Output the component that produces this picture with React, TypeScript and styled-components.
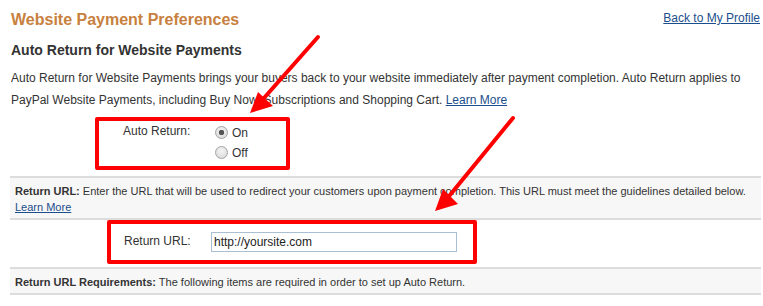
import styled, { createGlobalStyle } from "styled-components";

const GlobalStyle = createGlobalStyle`
  body {
    margin: 0;
    background: #fff;
    font-family: Arial, "Liberation Sans", sans-serif;
    color: #333;
  }
`;

const Page = styled.div`
  position: relative;
  width: 763px;
  height: 306px;
  overflow: hidden;
  padding: 0 2px 0 10px;
  box-sizing: border-box;
`;

const Header = styled.div`
  display: flex;
  justify-content: space-between;
  align-items: flex-start;
  padding-top: 9px;
`;

const Title = styled.h1`
  margin: 0 0 0 1px;
  font-size: 16px;
  line-height: 22px;
  font-weight: bold;
  color: #c8803e;
`;

const Link = styled.a`
  color: #1b4e8c;
  text-decoration: underline;
  font-size: 12px;
  cursor: pointer;
`;

const TopLink = styled(Link)`
  margin-top: 2px;
  margin-right: 1px;
`;

const Subtitle = styled.h2`
  margin: 10px 0 0 1px;
  font-size: 14px;
  line-height: 18px;
  font-weight: bold;
`;

const Intro = styled.p`
  margin: 8px 0 0 1px;
  font-size: 12px;
  line-height: 22px;
`;

const Highlight = styled.div<{ $left: number; $width: number; $height: number }>`
  margin-left: ${(p) => p.$left}px;
  width: ${(p) => p.$width}px;
  height: ${(p) => p.$height}px;
  border: 4px solid #ff0000;
  border-radius: 2px;
  box-sizing: border-box;
  display: flex;
  align-items: flex-start;
`;

const FieldLabel = styled.span<{ $indent: number; $width: number; $top: number }>`
  box-sizing: border-box;
  padding-left: ${(p) => p.$indent}px;
  margin-top: ${(p) => p.$top}px;
  width: ${(p) => p.$width}px;
  flex-shrink: 0;
  font-size: 12px;
  line-height: 16px;
`;

const RadioGroup = styled.div`
  display: flex;
  flex-direction: column;
  gap: 4px;
  margin-top: 4px;
`;

const RadioOption = styled.label`
  display: flex;
  align-items: center;
  gap: 4px;
  font-size: 12px;
  line-height: 16px;
`;

const Radio = styled.input.attrs({ type: "radio" })`
  appearance: none;
  margin: 0;
  width: 13px;
  height: 13px;
  border-radius: 50%;
  border: 1px solid #a3a3a3;
  background: radial-gradient(circle at 50% 35%, #f4f4f4, #d6d6d6);
  box-sizing: border-box;
  position: relative;
  top: -1px;
  &:checked {
    background: radial-gradient(circle, #555 0 2.5px, transparent 3px),
      radial-gradient(circle at 50% 35%, #f4f4f4, #d6d6d6);
  }
`;

const Divider = styled.div<{ $gap?: number }>`
  border-top: 2px solid #dcdcdc;
  margin-top: ${(p) => p.$gap ?? 0}px;
`;

const Band = styled.div`
  border-bottom: 2px solid #dcdcdc;
  background: #f7f7f7;
  padding: 5px 5px 3px 5px;
  font-size: 11px;
  line-height: 16px;
`;

const SmallLink = styled(Link)`
  font-size: 11px;
`;

const UrlRow = styled.div`
  padding: 0 0 3px;
`;

const UrlInput = styled.input`
  width: 246px;
  height: 20px;
  margin-top: 8px;
  border: 1px solid #a9bfd6;
  box-sizing: border-box;
  padding: 0 2px;
  font-family: Arial, "Liberation Sans", sans-serif;
  font-size: 12px;
  color: #222;
  outline: none;
`;

const Overlay = styled.svg`
  position: absolute;
  left: 0;
  top: 0;
  pointer-events: none;
`;

export default function App() {
  return (
    <Page>
      <GlobalStyle />
      <Header>
        <Title>Website Payment Preferences</Title>
        <TopLink>Back to My Profile</TopLink>
      </Header>
      <Subtitle>Auto Return for Website Payments</Subtitle>
      <Intro>
        Auto Return for Website Payments brings your buyers back to your website immediately after
        payment completion. Auto Return applies to PayPal Website Payments, including Buy Now,
        Subscriptions and Shopping Cart. <Link>Learn More</Link>
      </Intro>

      <Highlight $left={85} $width={195} $height={53} style={{ marginTop: 6 }}>
        <FieldLabel $indent={24} $width={116} $top={2}>
          Auto Return:
        </FieldLabel>
        <RadioGroup>
          <RadioOption>
            <Radio name="autoReturn" defaultChecked />
            On
          </RadioOption>
          <RadioOption>
            <Radio name="autoReturn" />
            Off
          </RadioOption>
        </RadioGroup>
      </Highlight>

      <Divider $gap={6} />
      <Band>
        <b>Return URL:</b> Enter the URL that will be used to redirect your customers upon payment
        completion. This URL must meet the guidelines detailed below.
        <br />
        <SmallLink>Learn More</SmallLink>
      </Band>
      <UrlRow>
        <Highlight $left={97} $width={370} $height={44}>
          <FieldLabel $indent={13} $width={100} $top={9}>
            Return URL:
          </FieldLabel>
          <UrlInput defaultValue="http://yoursite.com" />
        </Highlight>
      </UrlRow>
      <Divider />
      <Band>
        <b>Return URL Requirements:</b> The following items are required in order to set up Auto
        Return.
      </Band>

      <Overlay width="763" height="306" viewBox="0 0 763 306">
        <g stroke="#ff0000" strokeWidth="4" strokeLinecap="round">
          <line x1="318" y1="37" x2="264" y2="98" />
          <line x1="513" y1="118" x2="450" y2="195" />
        </g>
        <polygon points="250,113 273,106 258,92" fill="#ff0000" />
        <polygon points="435,211 458,204 443,189" fill="#ff0000" />
      </Overlay>
    </Page>
  );
}
